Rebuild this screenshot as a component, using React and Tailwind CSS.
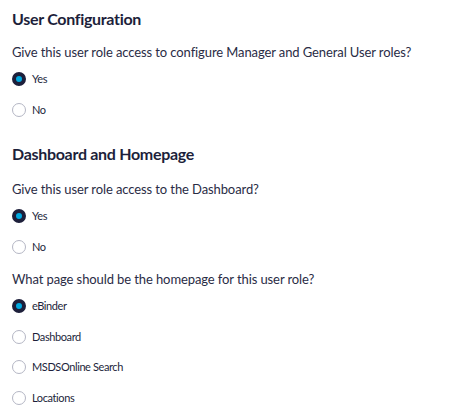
import React, { useState } from 'react';

const Radio = ({ label, checked, onChange }) => (
    <label className="flex items-center gap-[6px] h-[30.5px] cursor-pointer">
        <span
            className={
                checked
                    ? 'w-[14px] h-[14px] rounded-full border-[4px] border-[#1d1f3b] bg-[#00a9e0] shrink-0'
                    : 'w-[14px] h-[14px] rounded-full border border-[#b4b6c4] bg-white shrink-0'
            }
            onClick={onChange}
        />
        <span className="text-[11px] text-[#1d1f3b] tracking-[-0.4px]">{label}</span>
    </label>
);

const Question = ({ text, options, value, onChange }) => (
    <div>
        <p className="text-[13px] text-[#2a2c45] leading-[20px] mb-[2px] tracking-[-0.1px]">{text}</p>
        <div className="flex flex-col">
            {options.map((o) => (
                <Radio key={o} label={o} checked={value === o} onChange={() => onChange(o)} />
            ))}
        </div>
    </div>
);

export default function App() {
    const [config, setConfig] = useState('Yes');
    const [dash, setDash] = useState('Yes');
    const [home, setHome] = useState('eBinder');

    return (
        <div className="bg-white w-[451px] h-[416px] px-[12px] pt-[9px] font-['Lato','Liberation_Sans',sans-serif] text-[#1d1f3b]">
            <h2 className="text-[16px] font-bold leading-[20px] mb-[13px] tracking-[-0.3px] text-[#1d1f3b]">User Configuration</h2>
            <Question
                text="Give this user role access to configure Manager and General User roles?"
                options={['Yes', 'No']}
                value={config}
                onChange={setConfig}
            />
            <h2 className="text-[16px] font-bold leading-[20px] mt-[19px] mb-[15px] tracking-[-0.3px] text-[#1d1f3b]">Dashboard and Homepage</h2>
            <Question
                text="Give this user role access to the Dashboard?"
                options={['Yes', 'No']}
                value={dash}
                onChange={setDash}
            />
            <div className="mt-[7px]">
                <Question
                    text="What page should be the homepage for this user role?"
                    options={['eBinder', 'Dashboard', 'MSDSOnline Search', 'Locations']}
                    value={home}
                    onChange={setHome}
                />
            </div>
        </div>
    );
}
